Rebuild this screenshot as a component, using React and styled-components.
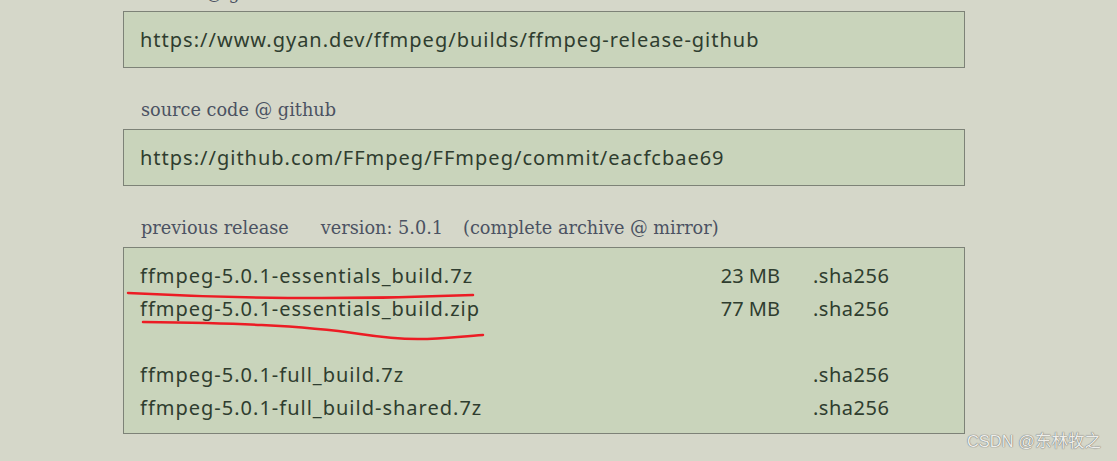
import styled, { createGlobalStyle } from "styled-components";

const Global = createGlobalStyle`
	html, body {
		margin: 0;
		padding: 0;
		background: #d5d7c9;
	}
	body {
		width: 1117px;
		height: 461px;
		overflow: hidden;
	}
`;

const Page = styled.div`
	position: relative;
	width: 1117px;
	height: 461px;
	overflow: hidden;
	background: #d5d7c9;
`;

const Column = styled.div`
	display: flex;
	flex-direction: column;
	width: 842px;
	margin-left: 123px;
`;

const Label = styled.div`
	font-family: "DejaVu Serif", Georgia, serif;
	font-size: 17.7px;
	line-height: 24px;
	color: #4b5262;
	padding-left: 18px;
	margin: ${(p) => (p.$first ? "-19px 0 6px" : "30px 0 7px")};
	white-space: pre;
`;

const Gap = styled.span`
	display: inline-block;
	width: ${(p) => p.$w}px;
`;

const Box = styled.div`
	background: #c9d4bb;
	border: 1px solid #7d8277;
	padding: ${(p) => (p.$list ? "11px 16px 9px" : "14px 16px 13px")};
	font-family: "Noto Sans", "Open Sans", sans-serif;
	font-size: 20px;
	line-height: 28px;
	letter-spacing: 1px;
	color: #2f3d2f;
`;

const Files = styled.div`
	display: grid;
	grid-template-columns: 1fr 80px 168px;
	grid-auto-rows: 33px;
	align-items: center;
`;

const Name = styled.div`
	white-space: nowrap;
`;

const Size = styled.div`
	text-align: right;
	white-space: nowrap;
	letter-spacing: 0;
`;

const Sha = styled.div`
	padding-left: 33px;
	letter-spacing: 0.5px;
`;

const Blank = styled.div`
	grid-column: 1 / -1;
`;

const Marks = styled.svg`
	position: absolute;
	left: 0;
	top: 0;
	pointer-events: none;
`;

const Watermark = styled.div`
	position: absolute;
	right: 16px;
	bottom: 9px;
	font-family: "Liberation Sans", "Noto Sans CJK SC", sans-serif;
	font-size: 16.5px;
	color: #eeeeea;
	text-shadow: 0 0 1px #6d6d6d, 0 0 1px #6d6d6d;
`;

const files = [
	{ name: "ffmpeg-5.0.1-essentials_build.7z", size: "23 MB" },
	{ name: "ffmpeg-5.0.1-essentials_build.zip", size: "77 MB" },
	null,
	{ name: "ffmpeg-5.0.1-full_build.7z", size: "" },
	{ name: "ffmpeg-5.0.1-full_build-shared.7z", size: "" },
];

export default function App() {
	return (
		<Page>
			<Global />
			<Column>
				<Label $first>mirror @ github</Label>
				<Box>https://www.gyan.dev/ffmpeg/builds/ffmpeg-release-github</Box>

				<Label>source code @ github</Label>
				<Box>https://github.com/FFmpeg/FFmpeg/commit/eacfcbae69</Box>

				<Label>
					previous release
					<Gap $w={32} />
					version: 5.0.1
					<Gap $w={20} />
					(complete archive @ mirror)
				</Label>
				<Box $list>
					<Files>
						{files.map((f, i) =>
							f ? (
								<>
									<Name key={"n" + i}>{f.name}</Name>
									<Size key={"s" + i}>{f.size}</Size>
									<Sha key={"h" + i}>.sha256</Sha>
								</>
							) : (
								<Blank key={"b" + i} />
							)
						)}
					</Files>
				</Box>
			</Column>

			<Marks width="1117" height="461" viewBox="0 0 1117 461">
				<path
					d="M128 293 Q 300 302 473 295"
					fill="none"
					stroke="#ec1c24"
					strokeWidth="2.5"
					strokeLinecap="round"
				/>
				<path
					d="M143 322 C 230 323, 300 325, 360 334 S 440 338, 483 335"
					fill="none"
					stroke="#ec1c24"
					strokeWidth="2.5"
					strokeLinecap="round"
				/>
			</Marks>

			<Watermark>CSDN @东林牧之</Watermark>
		</Page>
	);
}
